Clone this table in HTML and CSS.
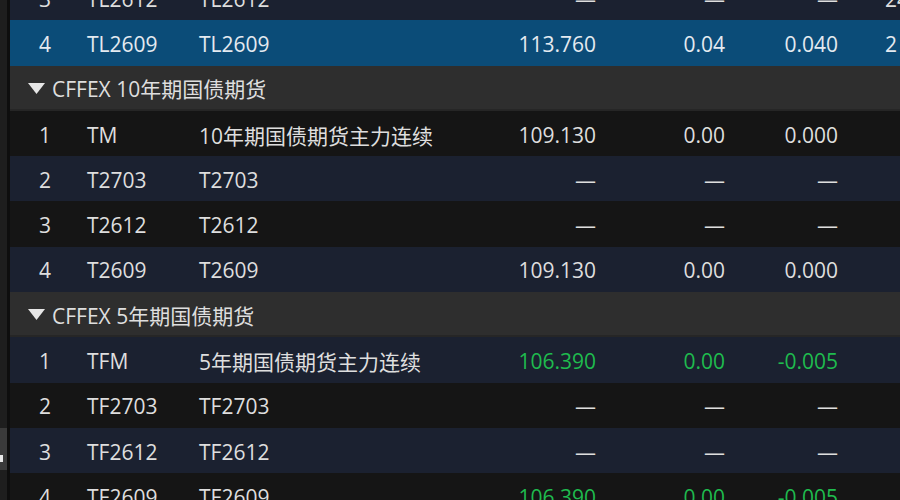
FILE: index.html
```html
<!DOCTYPE html>
<html lang="zh">
<head>
<meta charset="utf-8">
<link rel="stylesheet" href="styles.css">
</head>
<body>
<div class="app">
  <div class="side">
    <div class="side-space"></div>
    <div class="side-thumb"><span class="side-mark"></span></div>
  </div>
  <div class="sep"></div>
  <div class="table">
    <div class="row navy"><span class="idx">3</span><span class="code">TL2612</span><span class="name">TL2612</span><span class="num">—</span><span class="num">—</span><span class="num">—</span><span class="extra">24</span></div>
    <div class="row sel"><span class="idx">4</span><span class="code">TL2609</span><span class="name">TL2609</span><span class="num">113.760</span><span class="num">0.04</span><span class="num">0.040</span><span class="extra">2</span></div>
    <div class="group"><svg class="tri" width="17" height="11" viewBox="0 0 17 11"><path d="M0 0H17L8.5 11Z" fill="#e6e6e6"/></svg><span>CFFEX 10年期国债期货</span></div>
    <div class="row dark"><span class="idx">1</span><span class="code">TM</span><span class="name">10年期国债期货主力连续</span><span class="num">109.130</span><span class="num">0.00</span><span class="num">0.000</span><span class="extra"></span></div>
    <div class="row navy"><span class="idx">2</span><span class="code">T2703</span><span class="name">T2703</span><span class="num">—</span><span class="num">—</span><span class="num">—</span><span class="extra"></span></div>
    <div class="row dark"><span class="idx">3</span><span class="code">T2612</span><span class="name">T2612</span><span class="num">—</span><span class="num">—</span><span class="num">—</span><span class="extra"></span></div>
    <div class="row navy"><span class="idx">4</span><span class="code">T2609</span><span class="name">T2609</span><span class="num">109.130</span><span class="num">0.00</span><span class="num">0.000</span><span class="extra"></span></div>
    <div class="group"><svg class="tri" width="17" height="11" viewBox="0 0 17 11"><path d="M0 0H17L8.5 11Z" fill="#e6e6e6"/></svg><span>CFFEX 5年期国债期货</span></div>
    <div class="row navy"><span class="idx">1</span><span class="code">TFM</span><span class="name">5年期国债期货主力连续</span><span class="num green">106.390</span><span class="num green">0.00</span><span class="num green">-0.005</span><span class="extra"></span></div>
    <div class="row dark"><span class="idx">2</span><span class="code">TF2703</span><span class="name">TF2703</span><span class="num">—</span><span class="num">—</span><span class="num">—</span><span class="extra"></span></div>
    <div class="row navy"><span class="idx">3</span><span class="code">TF2612</span><span class="name">TF2612</span><span class="num">—</span><span class="num">—</span><span class="num">—</span><span class="extra"></span></div>
    <div class="row dark"><span class="idx">4</span><span class="code">TF2609</span><span class="name">TF2609</span><span class="num green">106.390</span><span class="num green">0.00</span><span class="num green">-0.005</span><span class="extra"></span></div>
  </div>
</div>
</body>
</html>
```
FILE: styles.css
```css
html, body {
  margin: 0;
  padding: 0;
  background: #161616;
  overflow: hidden;
}
.app {
  display: flex;
  width: 900px;
  height: 500px;
  overflow: hidden;
  font-family: "Open Sans", "Noto Sans CJK SC", sans-serif;
  font-size: 21px;
  color: #dedede;
}
.side {
  width: 7px;
  background: #1e1e1e;
  display: flex;
  flex-direction: column;
  flex: none;
}
.side-space { height: 428px; }
.side-thumb {
  height: 42px;
  background: #3a3a3a;
  display: flex;
  align-items: flex-end;
  padding-bottom: 8px;
  box-sizing: border-box;
}
.side-mark {
  width: 3px;
  height: 7px;
  background: #e8e8e8;
}
.sep {
  width: 3px;
  background: #0e0e0e;
  flex: none;
}
.table {
  flex: 1;
  margin-top: -25px;
  display: flex;
  flex-direction: column;
}
.row {
  height: 45.3px;
  flex: none;
  display: grid;
  grid-template-columns: 77px 112px 260px 137px 129px 113px 1fr;
  align-items: center;
  padding-top: 2px;
  box-sizing: border-box;
}
.row.dark { background: #151515; }
.row.navy { background: #1b2130; }
.row.sel { background: #0b4c78; color: #e4eaf0; }
.idx { text-align: center; padding-right: 7px; }
.num { text-align: right; }
.extra { padding-left: 47px; white-space: nowrap; overflow: hidden; }
.name { white-space: nowrap; }
.green { color: #1fbb4e; }
.group {
  height: 45.3px;
  flex: none;
  background: #2e2e2e;
  display: flex;
  align-items: center;
  padding-left: 18px;
  padding-top: 2px;
  gap: 7px;
  border-bottom: 2px solid #262626;
  box-sizing: border-box;
}
.tri { flex: none; }
```
